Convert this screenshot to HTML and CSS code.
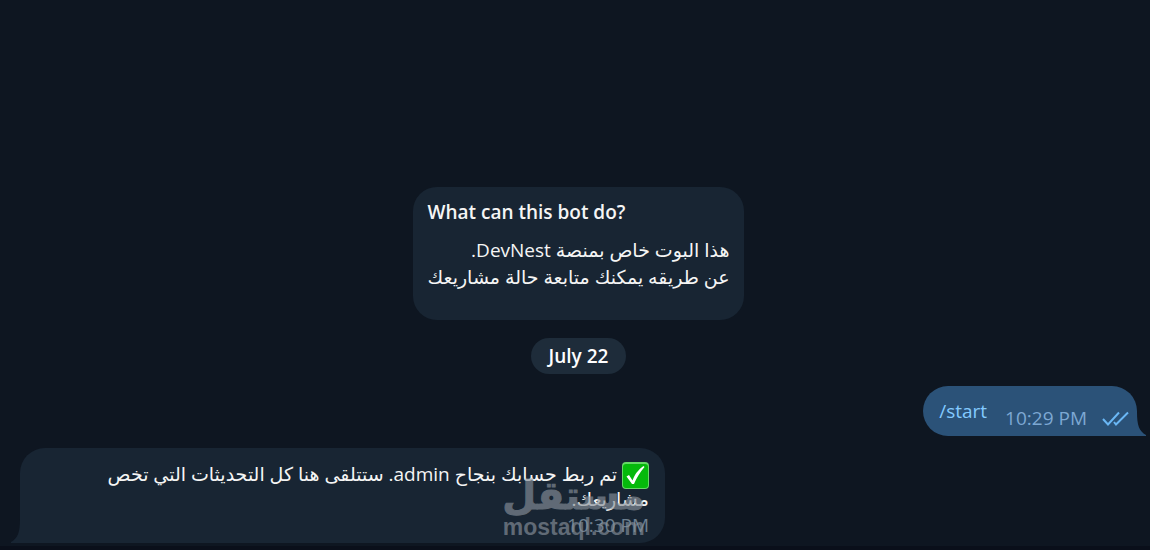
FILE: index.html
```
<!DOCTYPE html>
<html lang="en">
<head>
  <meta charset="UTF-8">
  <title>DevNest Bot</title>
  <link rel="stylesheet" href="styles.css">
</head>
<body>

  <main class="chat">
    <!-- Bot description -->
    <section class="intro">
      <h2>What can this bot do?</h2>
      <p dir="rtl">هذا البوت خاص بمنصة DevNest.<br>عن طريقه يمكنك متابعة حالة مشاريعك</p>
    </section>

    <div class="date">July 22</div>

    <!-- Sent -->
    <div class="message sent">
      <a class="command" href="#start">/start</a>
      <span class="time">10:29 PM</span>
      <svg class="checks" width="27" height="15" viewBox="0 0 27 15">
        <path d="M1 8l5 5.500L17 1.500M12 11l2 2.500L26 1.500"/>
      </svg>
      <svg class="tail" width="12" height="24" viewBox="0 0 12 24">
        <path d="M0 0h2C2 13 4 19 11 23v1H0z"/>
      </svg>
    </div>

    <!-- Received -->
    <div class="message received">
      <p dir="rtl"><svg class="emoji" width="27" height="27" viewBox="0 0 27 27">
          <rect class="emoji-edge" width="27" height="27" rx="4"/>
          <rect class="emoji-face" x="1" y="2" width="25" height="24" rx="3"/>
          <path d="M4.500 14.500l2.500-1.500 3.500 5.500C13 12 16 8 21.500 4l1 1C18 10 14.500 16 12 22h-2z"/>
        </svg> تم ربط حسابك بنجاح admin. ستتلقى هنا كل التحديثات التي تخص مشاريعك.</p>
      <span class="time">10:30 PM</span>
      <svg class="tail" width="12" height="24" viewBox="0 0 12 24">
        <path d="M12 0h-2C10 13 8 19 1 23v1h11z"/>
      </svg>
      <div class="watermark">
        <span class="watermark-name" lang="ar">مستقل</span>
        <span class="watermark-site">mostaql.com</span>
      </div>
    </div>
  </main>

</body>
</html>
```
FILE: styles.css
```
* {
  box-sizing: border-box;
}
body {
  margin: 0;
  background: #0e1621;
  color: #f5f5f5;
  font-family: "Open Sans", "Noto Sans", "DejaVu Sans", sans-serif;
  font-size: 19px;
  line-height: 26px;
}
h2, p {
  margin: 0;
}
.chat {
  display: flex;
  flex-direction: column;
  justify-content: flex-end;
  align-items: center;
  min-height: 100vh;
  padding: 12px 13px 3px 20px;
  border-bottom: 4px solid #0a0f1a;
}
.intro {
  padding: 12px 14px 29px;
  border-radius: 24px;
  background: #182533;
}
.intro h2 {
  margin-bottom: 12px;
  font-size: 19px;
  font-weight: 600;
}
.intro p {
  line-height: 27px;
}
.date {
  margin: 18px 0 12px;
  padding: 5px 18px;
  border-radius: 18px;
  background: #1e2c3a;
  color: #fff;
  font-weight: 600;
}
.message {
  position: relative;
  border-radius: 25px;
}
.time {
  color: #6d7f8f;
}
.tail {
  position: absolute;
  bottom: 0;
}
.sent {
  display: flex;
  align-self: flex-end;
  align-items: flex-end;
  padding: 12px 8px 5px 16px;
  border-bottom-right-radius: 0;
  background: #2b5278;
}
.command {
  margin: 0 18px 7px 0;
  color: #83caff;
  text-decoration: none;
}
.sent .time {
  color: #7da8d3;
}
.checks {
  margin: 0 0 5px 15px;
  fill: none;
  stroke: #6ab7f5;
  stroke-width: 2;
}
.sent .tail {
  right: -10px;
  fill: #2b5278;
}
.received {
  display: flex;
  flex-direction: column;
  align-self: flex-start;
  max-width: 645px;
  margin-top: 12px;
  padding: 14px 16px 5px;
  border-bottom-left-radius: 0;
  background: #182533;
}
.received p {
  line-height: 25px;
}
.received .time {
  align-self: flex-end;
}
.received .tail {
  left: -10px;
  fill: #182533;
}
.emoji {
  margin: -4px 0;
  vertical-align: -4px;
  fill: #fff;
}
.emoji-edge {
  fill: #65d865;
}
.emoji-face {
  fill: #05b90b;
}
.watermark {
  position: absolute;
  right: 20px;
  bottom: 3px;
  display: flex;
  flex-direction: column;
  align-items: center;
  color: #87909a;
  font-weight: 700;
  opacity: 0.65;
}
.watermark-name {
  font-family: "DejaVu Sans", sans-serif;
  font-size: 39px;
  line-height: 36px;
  -webkit-text-stroke: 1px #87909a;
}
.watermark-site {
  font-family: "Liberation Sans", sans-serif;
  font-size: 23px;
}
```
